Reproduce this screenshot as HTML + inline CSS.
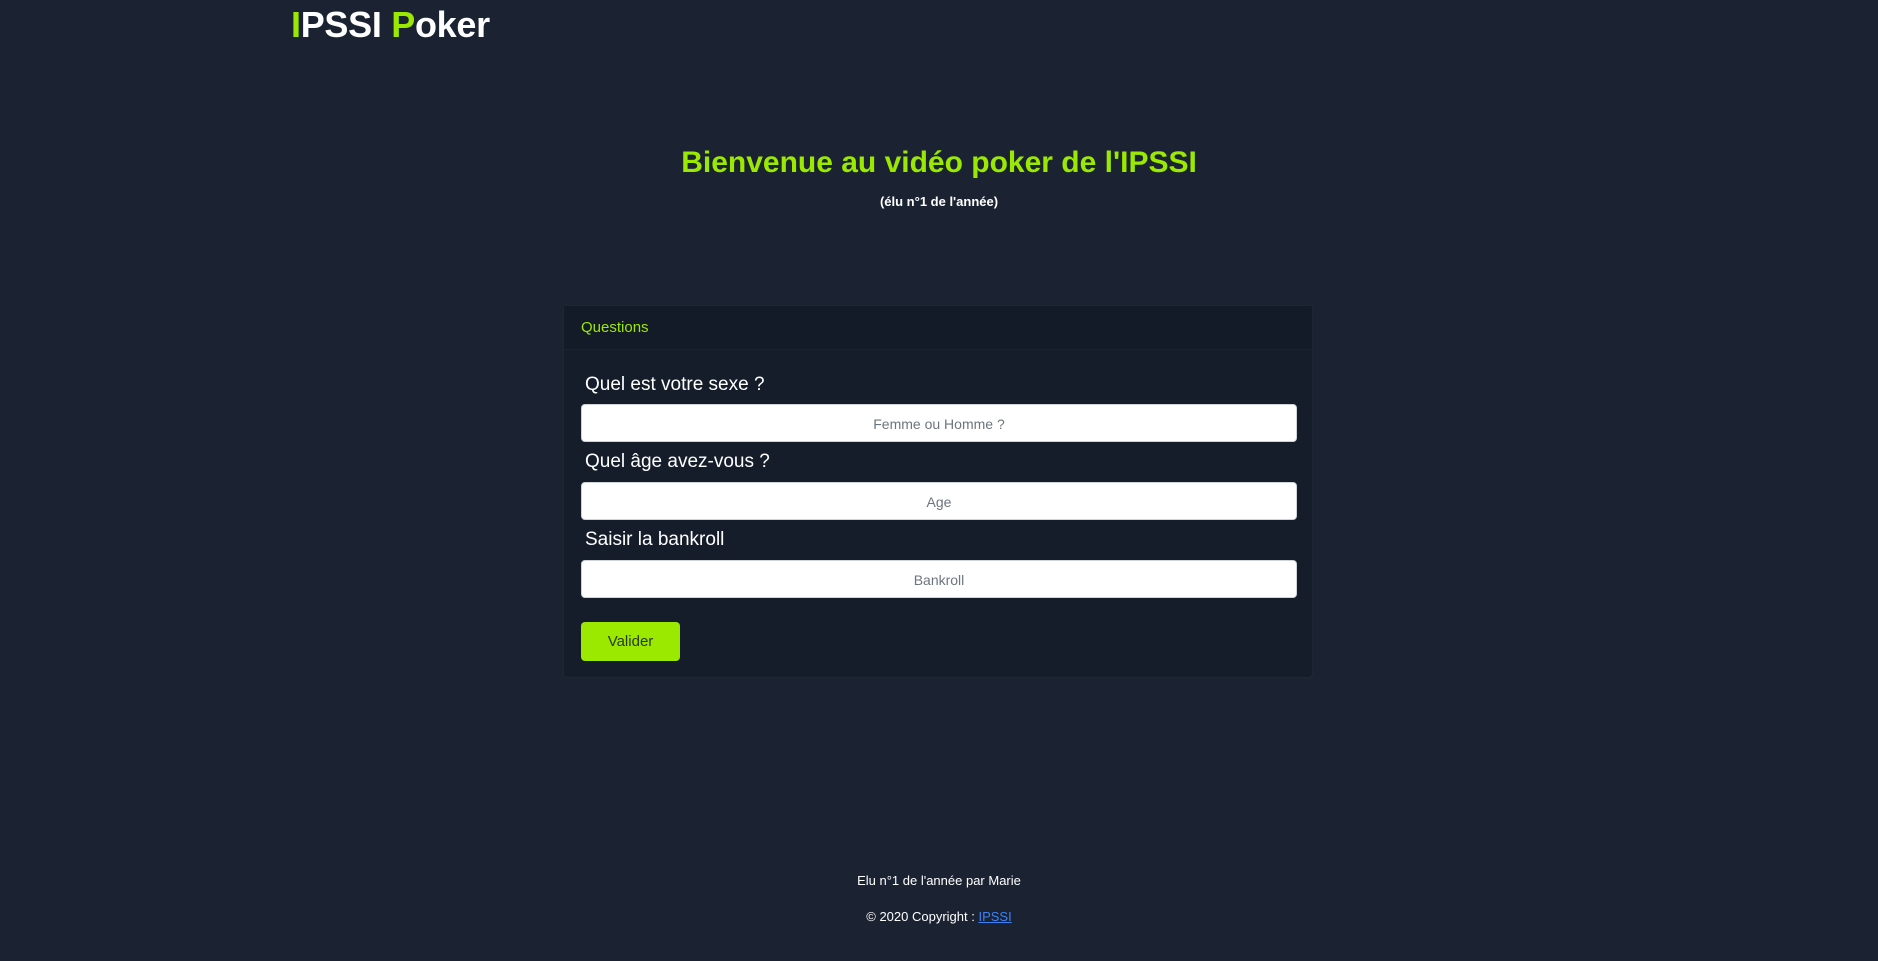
<!DOCTYPE html>
<html><head><meta charset="utf-8"><style>
*{box-sizing:border-box;margin:0;padding:0}
body{width:1878px;height:961px;background:#1b2333;font-family:"Liberation Sans",sans-serif;color:#fff;position:relative;overflow:hidden}
.abs{position:absolute}
.g{color:#9be800}
.logo{left:291px;top:4px;font-size:36px;font-weight:bold;letter-spacing:-0.3px}
h1{position:absolute;left:0;width:1878px;text-align:center;top:146px;font-size:30px;color:#9be800;font-weight:bold}
.sub{left:0;width:1878px;text-align:center;top:194px;font-size:13px;font-weight:bold}
.card{left:563px;top:305px;width:750px;height:373px;background:#151d2b;border-radius:4px;border:1px solid #1e2736}
.hd{height:44px;border-bottom:1px solid #1a2230;background:#131b28;padding:13px 17px;font-size:15px;color:#9be800}
.lbl{position:absolute;left:21px;font-size:19px}
.inp{position:absolute;left:17px;width:716px;height:38px;background:#fff;border:1px solid #ced4da;border-radius:4px;color:#6c757d;font-size:14px;text-align:center;line-height:38px}
.btn{position:absolute;left:17px;top:316px;width:99px;height:39px;background:#9be800;border-radius:4px;color:#2a3a10;font-size:15px;text-align:center;line-height:40px}
.ft{left:0;width:1878px;text-align:center;font-size:13px}
.ft a{color:#3b82f6;text-decoration:underline}
</style></head><body>
<div class="abs logo"><span class="g">I</span>PSSI <span class="g">P</span>oker</div>
<h1>Bienvenue au vidéo poker de l'IPSSI</h1>
<div class="abs sub">(élu n°1 de l'année)</div>
<div class="abs card">
<div class="hd">Questions</div>
<div class="lbl" style="top:68px">Quel est votre sexe ?</div>
<div class="inp" style="top:98px">Femme ou Homme ?</div>
<div class="lbl" style="top:145px">Quel âge avez-vous ?</div>
<div class="inp" style="top:176px">Age</div>
<div class="lbl" style="top:223px">Saisir la bankroll</div>
<div class="inp" style="top:254px">Bankroll</div>
<div class="btn">Valider</div>
</div>
<div class="abs ft" style="top:873px">Elu n°1 de l'année par Marie</div>
<div class="abs ft" style="top:909px">© 2020 Copyright : <a>IPSSI</a></div>
</body></html>
